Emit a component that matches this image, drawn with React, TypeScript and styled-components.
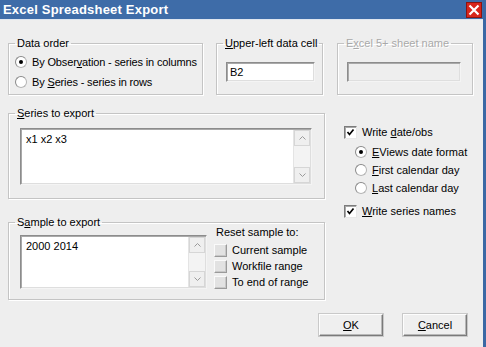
import React from 'react'
import styled, { createGlobalStyle } from 'styled-components'

const GlobalStyle = createGlobalStyle`
  html, body {
    margin: 0;
    padding: 0;
    background: #eeeeee;
  }
  body {
    font-family: "Liberation Sans", Arial, sans-serif;
    font-size: 11px;
    color: #000;
  }
`

const Window = styled.div`
  width: 486px;
  height: 347px;
  box-sizing: border-box;
  background: #eeeeee;
  border-right: 3px solid #3b68a4;
  display: flex;
  flex-direction: column;
  overflow: hidden;
`

const TitleBar = styled.div`
  height: 19px;
  background: #3e6ca8;
  border-bottom: 1px solid #dfe6ef;
  display: flex;
  align-items: center;
  justify-content: space-between;
  padding: 0 1px 0 3px;
`

const Title = styled.span`
  color: #fff;
  font-weight: bold;
  font-size: 13px;
  letter-spacing: 0.2px;
`

const CloseButton = styled.div`
  width: 16px;
  height: 16px;
  box-sizing: border-box;
  background: #d8261c;
  border: 1px solid #8c1410;
  display: flex;
  align-items: center;
  justify-content: center;
`

const Body = styled.div`
  flex: 1;
  padding: 17px 0 0 8px;
  display: flex;
  flex-direction: column;
`

const TopRow = styled.div`
  display: flex;
  align-items: flex-start;
`

const Group = styled.fieldset<{ $width: number; $height: number; $gap?: number; $top?: number }>`
  margin: ${p => p.$top || 0}px 0 0 ${p => p.$gap || 0}px;
  padding: 0;
  width: ${p => p.$width}px;
  height: ${p => p.$height}px;
  box-sizing: border-box;
  border: 1px solid #c4c4c4;
  box-shadow: inset 1px 1px 0 #fff, 1px 1px 0 #fff;
  min-width: 0;
`

const Legend = styled.legend<{ $disabled?: boolean }>`
  margin-left: 6px;
  padding: 0 2px;
  line-height: 13px;
  color: ${p => (p.$disabled ? '#a9a9a9' : '#000')};
  text-shadow: ${p => (p.$disabled ? '1px 1px 0 #fff' : 'none')};
`

const Key = styled.span`
  text-decoration: underline;
`

const OptionList = styled.div<{ $top: number; $left: number; $row: number }>`
  display: flex;
  flex-direction: column;
  padding: ${p => p.$top}px 0 0 ${p => p.$left}px;

  & > * {
    height: ${p => p.$row}px;
  }
`

const Option = styled.label`
  display: flex;
  align-items: center;
  gap: 5px;
  white-space: nowrap;
  letter-spacing: -0.15px;
`

const RadioMark = styled.span<{ $checked?: boolean }>`
  width: 12px;
  height: 12px;
  box-sizing: border-box;
  border-radius: 50%;
  border: 1px solid #b5b5b5;
  border-top-color: #8a8a8a;
  border-left-color: #8a8a8a;
  background: #fff;
  display: flex;
  align-items: center;
  justify-content: center;
  flex-shrink: 0;

  &::after {
    content: '';
    width: 4px;
    height: 4px;
    border-radius: 50%;
    background: ${p => (p.$checked ? '#000' : 'transparent')};
  }
`

const CheckMark = styled.span<{ $flat?: boolean }>`
  width: 13px;
  height: 13px;
  box-sizing: border-box;
  flex-shrink: 0;
  display: flex;
  align-items: center;
  justify-content: center;
  background: ${p => (p.$flat ? '#e2e2e2' : '#fff')};
  border: 1px solid;
  border-color: ${p => (p.$flat ? '#fafafa #9a9a9a #9a9a9a #fafafa' : '#7c7c7c #e8e8e8 #e8e8e8 #7c7c7c')};
  box-shadow: ${p => (p.$flat ? 'inset -1px -1px 0 #c8c8c8' : 'inset 1px 1px 0 #a8a8a8')};
`

const TextInput = styled.div<{ $width: number; $top: number; $left: number; $disabled?: boolean }>`
  width: ${p => p.$width}px;
  height: 20px;
  box-sizing: border-box;
  margin: ${p => p.$top}px 0 0 ${p => p.$left}px;
  padding: 2px 3px;
  line-height: 14px;
  background: ${p => (p.$disabled ? '#eeeeee' : '#fff')};
  border: 1px solid;
  border-color: #8c8c8c #f4f4f4 #f4f4f4 #8c8c8c;
  box-shadow: inset 1px 1px 0 #a9a9a9, inset -1px -1px 0 #dedede;
`

const TextArea = styled.div<{ $width: number; $height: number; $top: number }>`
  width: ${p => p.$width}px;
  height: ${p => p.$height}px;
  box-sizing: border-box;
  margin-top: ${p => p.$top}px;
  background: #fff;
  border: 1px solid;
  border-color: #8c8c8c #f4f4f4 #f4f4f4 #8c8c8c;
  box-shadow: inset 1px 1px 0 #a9a9a9, inset -1px -1px 0 #dedede;
  display: flex;
  flex-shrink: 0;
`

const AreaText = styled.div`
  flex: 1;
  padding: 3px 5px;
  line-height: 14px;
`

const ScrollBar = styled.div`
  width: 16px;
  margin: 1px 1px 1px 0;
  display: flex;
  flex-direction: column;
  background: #f3f3f3;
  border-left: 1px solid #e4e4e4;
`

const ScrollButton = styled.div`
  height: 16px;
  box-sizing: border-box;
  background: #efefef;
  border: 1px solid #d6d6d6;
  display: flex;
  align-items: center;
  justify-content: center;
`

const ScrollTrack = styled.div`
  flex: 1;
`

const Middle = styled.div`
  display: flex;
  align-items: flex-start;
`

const LeftColumn = styled.div`
  display: flex;
  flex-direction: column;
  padding-top: 12px;
`

const GroupContent = styled.div<{ $left: number }>`
  display: flex;
  align-items: flex-start;
  padding-left: ${p => p.$left}px;
`

const RightColumn = styled.div`
  display: flex;
  flex-direction: column;
  padding: 28px 0 0 19px;
`

const CheckRow = styled.label<{ $top?: number; $indent?: number; $height?: number }>`
  height: ${p => p.$height || 18}px;
  display: flex;
  align-items: center;
  gap: 5px;
  margin-top: ${p => p.$top || 0}px;
  padding-left: ${p => p.$indent || 0}px;
  white-space: nowrap;
`

const ResetColumn = styled.div`
  display: flex;
  flex-direction: column;
  margin: -3px 0 0 7px;
`

const ResetLabel = styled.div`
  line-height: 13px;
  padding-left: 2px;
  margin-bottom: 3px;
`

const ButtonRow = styled.div`
  display: flex;
  justify-content: flex-end;
  gap: 20px;
  padding: 14px 16px 0 0;
`

const Button = styled.div`
  width: 64px;
  height: 22px;
  box-sizing: border-box;
  background: #efefef;
  border: 1px solid;
  border-color: #fdfdfd #7a7a7a #7a7a7a #fdfdfd;
  box-shadow: 0 0 0 1px #c9c9c9, inset -1px -1px 0 #b8b8b8;
  display: flex;
  align-items: center;
  justify-content: center;
`

const Chevron = ({ up }: { up?: boolean }) => (
  <svg width="7" height="4" viewBox="0 0 7 4">
    <path d={up ? 'M0.5 3.5 L3.5 0.5 L6.5 3.5' : 'M0.5 0.5 L3.5 3.5 L6.5 0.5'} fill="none" stroke="#9a9a9a" strokeWidth="1" />
  </svg>
)

const Tick = () => (
  <svg width="9" height="9" viewBox="0 0 9 9">
    <path d="M1.5 4 L3.5 6.5 L7.5 1.5" fill="none" stroke="#000" strokeWidth="1.7" />
  </svg>
)

const Scroll = () => (
  <ScrollBar>
    <ScrollButton><Chevron up /></ScrollButton>
    <ScrollTrack />
    <ScrollButton><Chevron /></ScrollButton>
  </ScrollBar>
)

const App: React.FC = () => {
  return (
    <>
      <GlobalStyle />
      <Window>
        <TitleBar>
          <Title>Excel Spreadsheet Export</Title>
          <CloseButton>
            <svg width="12" height="12" viewBox="0 0 12 12">
              <path d="M1.5 1.5 L10.5 10.5 M10.5 1.5 L1.5 10.5" stroke="#fff" strokeWidth="2.2" />
            </svg>
          </CloseButton>
        </TitleBar>

        <Body>
          <TopRow>
            <Group $width={195} $height={58}>
              <Legend>Data order</Legend>
              <OptionList $top={2} $left={6} $row={20}>
                <Option><RadioMark $checked /><span>By Obser<Key>v</Key>ation - series in columns</span></Option>
                <Option><RadioMark /><span>By <Key>S</Key>eries - series in rows</span></Option>
              </OptionList>
            </Group>

            <Group $width={107} $height={58} $gap={13}>
              <Legend><Key>U</Key>pper-left data cell</Legend>
              <TextInput $width={89} $top={12} $left={9}>B2</TextInput>
            </Group>

            <Group $width={136} $height={58} $gap={14}>
              <Legend $disabled>E<Key>x</Key>cel 5+ sheet name</Legend>
              <TextInput $width={114} $top={12} $left={9} $disabled />
            </Group>
          </TopRow>

          <Middle>
            <LeftColumn>
              <Group $width={317} $height={92}>
                <Legend><Key>S</Key>eries to export</Legend>
                <GroupContent $left={11}>
                  <TextArea $width={292} $height={57} $top={8}>
                    <AreaText>x1 x2 x3</AreaText>
                    <Scroll />
                  </TextArea>
                </GroupContent>
              </Group>

              <Group $width={317} $height={84} $top={17}>
                <Legend>S<Key>a</Key>mple to export</Legend>
                <GroupContent $left={11}>
                  <TextArea $width={187} $height={54} $top={6}>
                    <AreaText>2000 2014</AreaText>
                    <Scroll />
                  </TextArea>
                  <ResetColumn>
                    <ResetLabel>Reset sample to:</ResetLabel>
                    <CheckRow $height={16}><CheckMark $flat /><span>Current sample</span></CheckRow>
                    <CheckRow $height={16}><CheckMark $flat /><span>Workfile range</span></CheckRow>
                    <CheckRow $height={16}><CheckMark $flat /><span>To end of range</span></CheckRow>
                  </ResetColumn>
                </GroupContent>
              </Group>
            </LeftColumn>

            <RightColumn>
              <CheckRow><CheckMark><Tick /></CheckMark><span>Write <Key>d</Key>ate/obs</span></CheckRow>
              <CheckRow $top={2} $indent={11}><RadioMark $checked /><span><Key>E</Key>Views date format</span></CheckRow>
              <CheckRow $indent={11}><RadioMark /><span><Key>F</Key>irst calendar day</span></CheckRow>
              <CheckRow $indent={11}><RadioMark /><span><Key>L</Key>ast calendar day</span></CheckRow>
              <CheckRow $top={5}><CheckMark><Tick /></CheckMark><span><Key>W</Key>rite series names</span></CheckRow>
            </RightColumn>
          </Middle>

          <ButtonRow>
            <Button><span><Key>O</Key>K</span></Button>
            <Button><span><Key>C</Key>ancel</span></Button>
          </ButtonRow>
        </Body>
      </Window>
    </>
  )
}

export default App
